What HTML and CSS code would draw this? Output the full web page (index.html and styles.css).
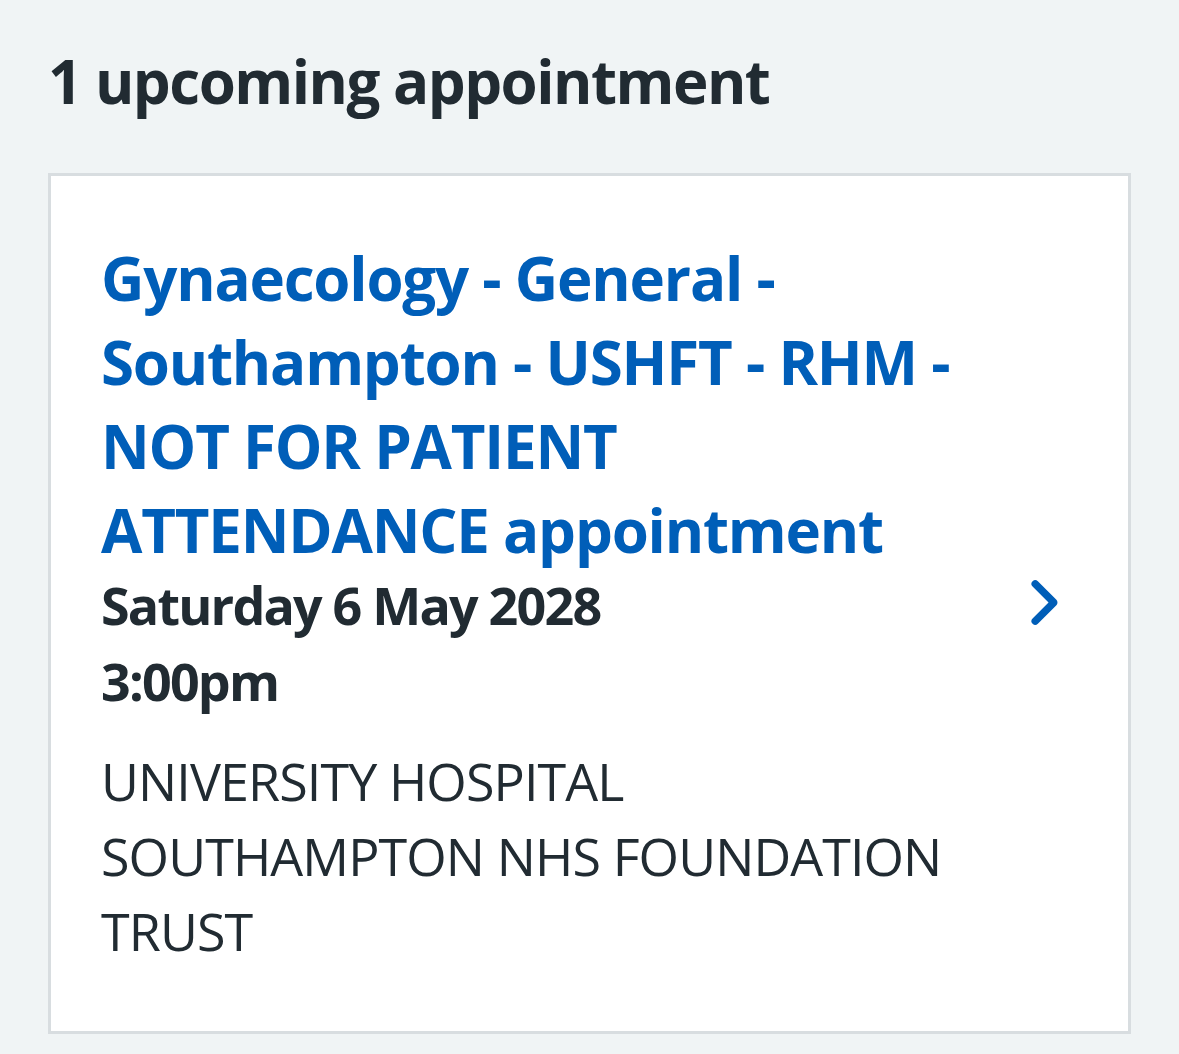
FILE: index.html
```html
<!DOCTYPE html>
<html lang="en">
<head>
  <meta charset="UTF-8">
  <meta name="viewport" content="width=device-width, initial-scale=1.0">
  <title>Upcoming appointments</title>
  <link rel="stylesheet" href="styles.css">
</head>
<body>
  <h2 class="page-heading">1 upcoming appointment</h2>
  <a class="appt-card" href="#">
    <div class="appt-body">
      <h3 class="appt-title">Gynaecology - General - Southampton - USHFT - RHM - NOT FOR PATIENT ATTENDANCE appointment</h3>
      <p class="appt-when">Saturday 6 May 2028<br>3:00pm</p>
      <p class="appt-where">UNIVERSITY HOSPITAL SOUTHAMPTON NHS FOUNDATION TRUST</p>
    </div>
    <svg class="chevron" viewBox="0 0 24 24" aria-hidden="true">
      <path d="M15.5 12a1 1 0 0 1-.29.71l-5 5a1 1 0 0 1-1.42-1.42l4.3-4.29-4.3-4.29a1 1 0 0 1 1.42-1.42l5 5a1 1 0 0 1 .29.71z"></path>
    </svg>
  </a>
</body>
</html>
```
FILE: styles.css
```css
body {
  margin: 0;
  padding: 39px 48px 20px;
  background: #f0f4f5;
  color: #212b32;
  font-family: 'Open Sans', 'Noto Sans', sans-serif;
}
.page-heading {
  margin: 0 0 50px;
  font-size: 60px;
  line-height: 84px;
  font-weight: 700;
  letter-spacing: -1.5px;
}
.appt-card {
  display: flex;
  align-items: center;
  background: #fff;
  border: 3px solid #d8dde0;
  padding: 60px 39px 63px 50px;
  text-decoration: none;
  color: inherit;
}
.appt-body {
  flex: 1;
}
.appt-title {
  margin: 0;
  color: #005eb8;
  font-size: 60px;
  line-height: 84px;
  font-weight: 700;
  letter-spacing: -1.2px;
}
.appt-when {
  margin: -5px 0 0;
  font-size: 52px;
  line-height: 76px;
  font-weight: 700;
  letter-spacing: -1.8px;
}
.appt-where {
  margin: 24px 0 0;
  font-size: 52px;
  line-height: 75px;
  letter-spacing: -0.9px;
}
.chevron {
  flex-shrink: 0;
  width: 89px;
  height: 89px;
  margin-left: 20px;
  fill: #005eb8;
}
```
